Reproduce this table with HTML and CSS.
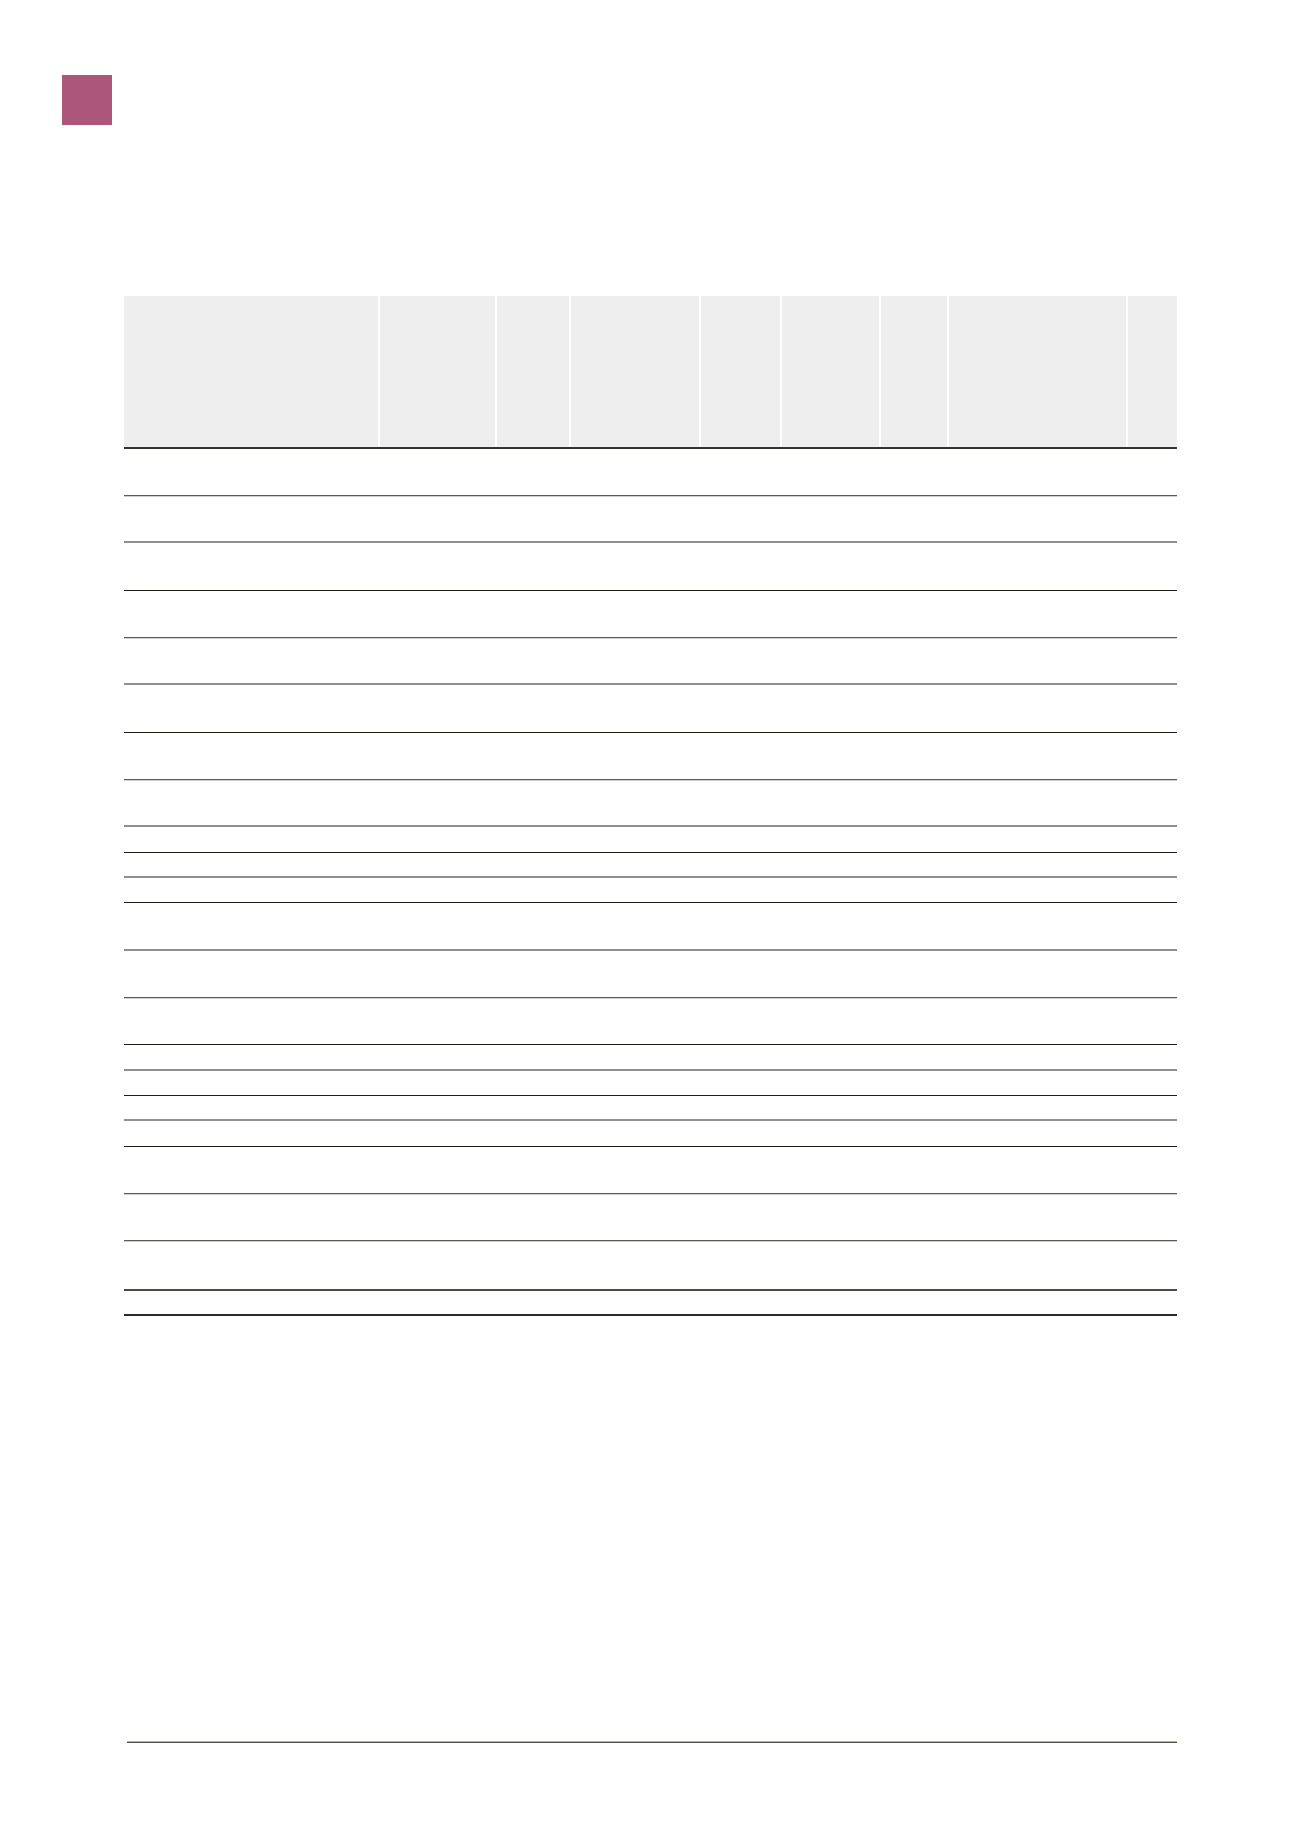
FILE: index.html
```html
<!DOCTYPE html>
<html lang="en">
<head>
<meta charset="utf-8">
<title>Table page</title>
<link rel="stylesheet" href="styles.css">
</head>
<body>
<div class="page">
  <div class="marker-wrap"><div class="marker"></div></div>
  <div class="table">
    <div class="thead">
      <div class="th"></div><div class="th"></div><div class="th"></div>
      <div class="th"></div><div class="th"></div><div class="th"></div>
      <div class="th"></div><div class="th"></div><div class="th"></div>
    </div>
    <div class="row first ln-mid"></div>
    <div class="row tall ln-gray"></div>
    <div class="row tall ln-dark"></div>
    <div class="row tall ln-mid"></div>
    <div class="row tall ln-gray"></div>
    <div class="row tall ln-dark"></div>
    <div class="row tall ln-mid"></div>
    <div class="row tall ln-gray"></div>
    <div class="row short ln-dark"></div>
    <div class="row short ln-gray"></div>
    <div class="row short ln-dark"></div>
    <div class="row tall ln-gray"></div>
    <div class="row tall ln-mid"></div>
    <div class="row tall ln-dark"></div>
    <div class="row short ln-gray"></div>
    <div class="row short ln-dark"></div>
    <div class="row short ln-gray"></div>
    <div class="row short ln-dark"></div>
    <div class="row tall ln-mid"></div>
    <div class="row tall ln-mid"></div>
    <div class="row tall-plus ln-double"></div>
    <div class="row short ln-thick"></div>
  </div>
  <div class="footer-rule"></div>
</div>
</body>
</html>
```

FILE: styles.css
```css
html, body {
  margin: 0;
  padding: 0;
  background: #ffffff;
  font-family: "Liberation Sans", Arial, sans-serif;
}

.page {
  width: 1300px;
  height: 1839px;
  position: relative;
  box-sizing: border-box;
  padding-top: 75px;
}

.marker-wrap {
  padding-left: 62px;
  height: 50px;
}

.marker {
  width: 50px;
  height: 50px;
  background: #ab567a;
}

.table {
  margin-top: 171px;
  margin-left: 124px;
  width: 1053px;
}

.thead {
  display: grid;
  grid-template-columns: 253.5px 115.5px 71.7px 128.3px 79px 97px 66px 177.5px 48.5px;
  column-gap: 2px;
  height: 153px;
  box-sizing: border-box;
  border-bottom: 2px solid #36332c;
}

.th {
  background: #eeeeee;
}

.row {
  box-sizing: border-box;
  width: 100%;
}

.row.first { height: 47px; }
.row.tall { height: 47.33px; }
.row.tall-plus { height: 49.33px; }
.row.short { height: 25.33px; }

.ln-dark { border-bottom: 1px solid #1f1c17; }
.ln-gray { border-bottom: 2px solid #8f8f8d; }
.ln-mid { border-bottom: 1px solid #5e5b55; box-shadow: 0 1px 0 #cfcfcd; }
.ln-double { border-bottom: 2px solid #4d4a43; }
.ln-thick { border-bottom: 2px solid #2e2b24; }

.footer-rule {
  margin-top: 425.5px;
  margin-left: 127px;
  width: 1050px;
  height: 0;
  border-top: 1px solid #b5b2ab;
  border-bottom: 1px solid #55524a;
}
```
